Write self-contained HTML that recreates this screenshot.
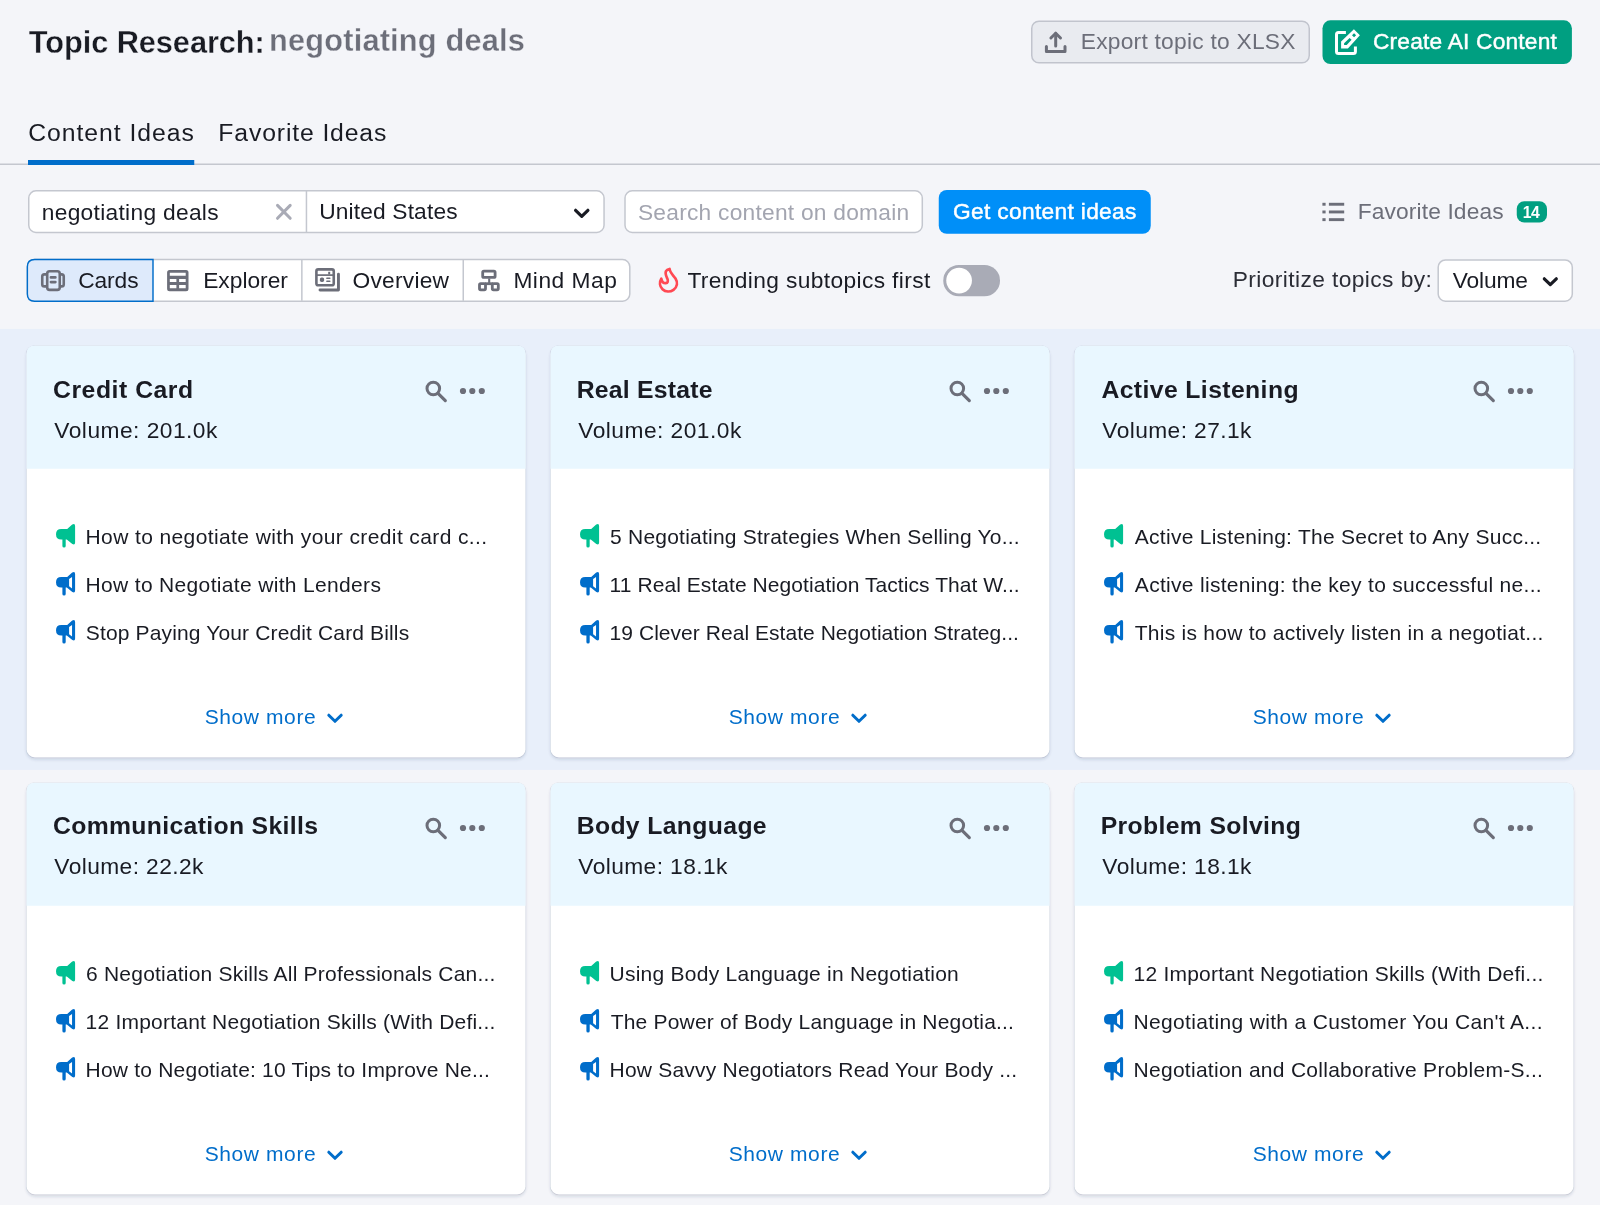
<!DOCTYPE html>
<html lang="en"><head><meta charset="utf-8"><title>Topic Research: negotiating deals</title>
<style>
*{box-sizing:border-box;margin:0;padding:0}
html,body{width:1600px;height:1205px;overflow:hidden}
body{background:#f4f5f9;font-family:"Liberation Sans",Arial,sans-serif;color:#191b23;position:relative}
.t{position:absolute;white-space:nowrap;line-height:1}
.ic{position:absolute;display:block;overflow:visible}
</style></head><body>
<svg width="0" height="0" style="position:absolute"><defs>
<path id="mega" d="M5.3 4.9H11.2L16.2 .6Q19.1 -.9 19.1 2V18.5Q19.1 21.5 16.3 20.1L10.8 15.6H9.7V21.9Q9.7 23.5 8.05 23.5Q6.4 23.5 6.4 21.9V15.6H5.3Q0 15.6 0 10.25Q0 4.9 5.3 4.9Z"/>
<path id="megao" fill-rule="evenodd" d="M5.3 4.9H11.2L16.2 .6Q19.1 -.9 19.1 2V18.5Q19.1 21.5 16.3 20.1L10.8 15.6H9.7V21.9Q9.7 23.5 8.05 23.5Q6.4 23.5 6.4 21.9V15.6H5.3Q0 15.6 0 10.25Q0 4.9 5.3 4.9ZM13.1 6.9L16.05 4.9V16.5L13.1 14.2Z"/>
</defs></svg>

<svg class="ic" style="left:0;top:0" width="1600" height="1205" viewBox="0 0 1600 1205">
<defs><filter id="sh" x="-5%" y="-5%" width="110%" height="112%"><feGaussianBlur in="SourceAlpha" stdDeviation="1.5"/><feOffset dy="1.5" result="b"/><feFlood flood-color="#28375a" flood-opacity=".16"/><feComposite in2="b" operator="in"/></filter></defs>
<rect x="0" y="328.9" width="1600" height="441" fill="#e8effa"/>
<!-- header buttons -->
<rect x="1031.75" y="21.15" width="277.5" height="41.7" rx="7.25" fill="#e9ebf0" stroke="#c1c4cd" stroke-width="1.5"/>
<rect x="1322.5" y="20.3" width="249.4" height="43.7" rx="8" fill="#009f81"/>
<!-- tabs -->
<rect x="0" y="163.5" width="1600" height="1.5" fill="#c4c7cf"/>
<rect x="28" y="160" width="166.25" height="5" fill="#006dca"/>
<!-- inputs -->
<rect x="28.75" y="190.85" width="575.3" height="41.6" rx="7.25" fill="#fff" stroke="#c4c7cf" stroke-width="1.5"/>
<rect x="305.7" y="191" width="1.5" height="41.4" fill="#c4c7cf"/>
<rect x="625" y="190.85" width="297.3" height="41.6" rx="7.25" fill="#fff" stroke="#c4c7cf" stroke-width="1.5"/>
<rect x="938.75" y="190" width="212" height="43.75" rx="8" fill="#008ff8"/>
<rect x="1516.75" y="201.25" width="30.25" height="21.25" rx="7.5" fill="#009f81"/>
<!-- view switch -->
<rect x="27.5" y="259.6" width="602.3" height="41.6" rx="7.25" fill="#fff" stroke="#c4c7cf" stroke-width="1.5"/>
<path d="M153 259.5H34.6Q27.35 259.5 27.35 266.75V294.05Q27.35 301.3 34.6 301.3H153Z" fill="#deeafb" stroke="#006dca" stroke-width="1.45"/>
<rect x="301.1" y="260" width="1.5" height="40.8" fill="#c4c7cf"/>
<rect x="462.5" y="260" width="1.5" height="40.8" fill="#c4c7cf"/>
<rect x="943.25" y="265" width="56.75" height="31.25" rx="15.6" fill="#a9abb6"/>
<circle cx="959.1" cy="280.6" r="12.85" fill="#fff"/>
<rect x="1438.2" y="260" width="134.1" height="41.2" rx="7.25" fill="#fff" stroke="#c4c7cf" stroke-width="1.5"/>
<rect x="26.55" y="345.70" width="499.0" height="411.8" rx="8.3" filter="url(#sh)"/>
<rect x="26.05" y="345.20" width="500.0" height="412.8" rx="8.8" fill="#3c4b6e" fill-opacity=".13"/>
<rect x="26.55" y="345.70" width="499.0" height="411.8" rx="8.3" fill="#fff"/>
<path d="M26.55 468.70V354.00Q26.55 345.70 34.85 345.70H517.25Q525.55 345.70 525.55 354.00V468.70Z" fill="#e9f7ff"/>
<rect x="550.55" y="345.70" width="499.0" height="411.8" rx="8.3" filter="url(#sh)"/>
<rect x="550.05" y="345.20" width="500.0" height="412.8" rx="8.8" fill="#3c4b6e" fill-opacity=".13"/>
<rect x="550.55" y="345.70" width="499.0" height="411.8" rx="8.3" fill="#fff"/>
<path d="M550.55 468.70V354.00Q550.55 345.70 558.85 345.70H1041.25Q1049.55 345.70 1049.55 354.00V468.70Z" fill="#e9f7ff"/>
<rect x="1074.55" y="345.70" width="499.0" height="411.8" rx="8.3" filter="url(#sh)"/>
<rect x="1074.05" y="345.20" width="500.0" height="412.8" rx="8.8" fill="#3c4b6e" fill-opacity=".13"/>
<rect x="1074.55" y="345.70" width="499.0" height="411.8" rx="8.3" fill="#fff"/>
<path d="M1074.55 468.70V354.00Q1074.55 345.70 1082.85 345.70H1565.25Q1573.55 345.70 1573.55 354.00V468.70Z" fill="#e9f7ff"/>
<rect x="26.55" y="782.70" width="499.0" height="411.8" rx="8.3" filter="url(#sh)"/>
<rect x="26.05" y="782.20" width="500.0" height="412.8" rx="8.8" fill="#3c4b6e" fill-opacity=".13"/>
<rect x="26.55" y="782.70" width="499.0" height="411.8" rx="8.3" fill="#fff"/>
<path d="M26.55 905.70V791.00Q26.55 782.70 34.85 782.70H517.25Q525.55 782.70 525.55 791.00V905.70Z" fill="#e9f7ff"/>
<rect x="550.55" y="782.70" width="499.0" height="411.8" rx="8.3" filter="url(#sh)"/>
<rect x="550.05" y="782.20" width="500.0" height="412.8" rx="8.8" fill="#3c4b6e" fill-opacity=".13"/>
<rect x="550.55" y="782.70" width="499.0" height="411.8" rx="8.3" fill="#fff"/>
<path d="M550.55 905.70V791.00Q550.55 782.70 558.85 782.70H1041.25Q1049.55 782.70 1049.55 791.00V905.70Z" fill="#e9f7ff"/>
<rect x="1074.55" y="782.70" width="499.0" height="411.8" rx="8.3" filter="url(#sh)"/>
<rect x="1074.05" y="782.20" width="500.0" height="412.8" rx="8.8" fill="#3c4b6e" fill-opacity=".13"/>
<rect x="1074.55" y="782.70" width="499.0" height="411.8" rx="8.3" fill="#fff"/>
<path d="M1074.55 905.70V791.00Q1074.55 782.70 1082.85 782.70H1565.25Q1573.55 782.70 1573.55 791.00V905.70Z" fill="#e9f7ff"/>
</svg>

<!-- icons -->
<svg class="ic" style="left:0;top:0" width="1600" height="320" viewBox="0 0 1600 320">
<g fill="none" stroke="#6c6e79" stroke-width="3" stroke-linecap="round" stroke-linejoin="round">
<path d="M1046.4 46.6V51.4H1065V46.6"/><path d="M1055.7 33.6V46.1"/><path d="M1050.9 38L1055.7 33.2L1060.5 38"/>
</g>
<path d="M1345.9 32.6H1338.5Q1336.5 32.6 1336.5 34.6V51.4Q1336.5 53.4 1338.5 53.4H1353.4Q1355.4 53.4 1355.4 51.4V46.6" fill="none" stroke="#fff" stroke-width="3"/>
<path fill="#fff" fill-rule="evenodd" d="M1341.1 48.6V41.6L1353.9 29.3L1359.9 35.3L1347.9 48.6ZM1354.05 33.3L1356.1 35.3L1354.05 37.3L1352 35.3ZM1349.6 37.9L1351.6 39.7L1346.7 44.9H1344.1V43.2Z"/>
<path d="M277.5 205.4L290.2 218.3M290.2 205.4L277.5 218.3" stroke="#a9abb6" stroke-width="3" stroke-linecap="round"/>
<path d="M575.6 210.3L581.75 216.3L587.9 210.3" fill="none" stroke="#191b23" stroke-width="3.2" stroke-linecap="round" stroke-linejoin="round"/>
<path d="M1544.3 278.8L1550.3 284.6L1556.3 278.8" fill="none" stroke="#191b23" stroke-width="3.2" stroke-linecap="round" stroke-linejoin="round"/>
<g fill="#6c6e79">
<rect x="1322.4" y="202.8" width="3.2" height="2.9"/><rect x="1328.9" y="202.8" width="15.3" height="2.9"/>
<rect x="1322.4" y="210.5" width="3.2" height="2.9"/><rect x="1328.9" y="210.5" width="15.3" height="2.9"/>
<rect x="1322.4" y="218.2" width="3.2" height="2.9"/><rect x="1328.9" y="218.2" width="15.3" height="2.9"/>
</g>
<!-- cards icon -->
<g fill="none" stroke="#6c6e79" stroke-width="2.6" stroke-linecap="round" stroke-linejoin="round">
<rect x="47.2" y="271.25" width="12.55" height="18.65" rx="2.4"/>
<path d="M50.9 277.4H55.4M50.9 282.1H55.4"/>
<path d="M46.5 274.4H44.4Q42.25 274.4 42.25 276.6V284.2Q42.25 286.4 44.4 286.4H46.5"/>
<path d="M60.5 274.4H61.6Q63.75 274.4 63.75 276.6V284.2Q63.75 286.4 61.6 286.4H60.5"/>
</g>
<!-- explorer icon -->
<path fill="#6c6e79" fill-rule="evenodd" d="M169.6 270H186Q188.5 270 188.5 272.5V288.7Q188.5 291.2 186 291.2H169.6Q167.1 291.2 167.1 288.7V272.5Q167.1 270 169.6 270ZM169.8 272.8V275.8H185.7V272.8ZM169.8 278.9V281.9H176.4V278.9ZM179.1 278.9V281.9H185.7V278.9ZM169.8 285.1V288.2H176.4V285.1ZM179.1 285.1V288.2H185.7V285.1Z"/>
<!-- overview icon -->
<g fill="none" stroke="#6c6e79" stroke-linecap="round" stroke-linejoin="round">
<rect x="316.4" y="269.4" width="17.35" height="15.9" rx="1.8" stroke-width="2.6"/>
<path d="M317 275.1H333" stroke-width="1.7" stroke-linecap="butt"/>
<path d="M338.45 274.2V289.95H320" stroke-width="2.9"/>
<path d="M326.9 278.3H329.8M326.9 281.3H329.8" stroke-width="1.6"/>
</g>
<rect x="319.9" y="277.4" width="4.2" height="4.5" rx="1.6" fill="#6c6e79"/>
<rect x="328.2" y="271.8" width="2" height="2.6" fill="#6c6e79"/>
<!-- mind map icon -->
<g fill="none" stroke="#6c6e79" stroke-width="2.8" stroke-linejoin="round">
<rect x="482.7" y="271.2" width="12.4" height="6.2" rx="1.2"/>
<rect x="479.5" y="283.7" width="6" height="6.1" rx="1.2"/>
<rect x="492.3" y="283.7" width="6" height="6.1" rx="1.2"/>
<path d="M485 283.7H493" />
<path d="M489.2 278.5V283" stroke-width="2.1"/>
</g>
<!-- fire -->
<path d="M669.6 269C669.8 272.5 673.5 275.5 675.5 278.5C678 282.5 677.3 287 673.5 289.8C670 292.3 665.5 292 662.5 289.2C659.5 286.3 659.3 282 661.3 278.7C661.8 281.5 663.5 283.3 665.7 283.2C667.8 283 668.4 281 667.4 278.8C666 275.8 664.8 273.5 666 271.2C666.8 269.8 668 269.4 669.6 269Z" fill="none" stroke="#ff4953" stroke-width="2.7" stroke-linejoin="round"/>
</svg>
<svg class="ic" style="left:424.25px;top:378.5px" width="24" height="24" viewBox="0 0 24 24"><circle cx="9.3" cy="9.5" r="6.3" fill="none" stroke="#6c6e79" stroke-width="3"/><path d="M14 14.3L21.3 21.6" stroke="#6c6e79" stroke-width="3.2" stroke-linecap="round"/></svg>
<svg class="ic" style="left:459.25px;top:387.0px" width="27" height="8" viewBox="0 0 27 8"><circle cx="4" cy="4" r="3.1" fill="#6c6e79"/><circle cx="13.3" cy="4" r="3.1" fill="#6c6e79"/><circle cx="22.8" cy="4" r="3.1" fill="#6c6e79"/></svg>
<svg class="ic" style="left:55.95px;top:523.70px" width="19.1" height="23.5" viewBox="0 0 19.1 23.5"><use href="#mega" fill="#00c192"/></svg>
<svg class="ic" style="left:55.95px;top:571.85px" width="19.1" height="23.5" viewBox="0 0 19.1 23.5"><use href="#megao" fill="#006dca"/></svg>
<svg class="ic" style="left:55.95px;top:620.00px" width="19.1" height="23.5" viewBox="0 0 19.1 23.5"><use href="#megao" fill="#006dca"/></svg>
<svg class="ic" style="left:326.25px;top:712.0px" width="18" height="13" viewBox="0 0 18 13"><path d="M2.8 3.2L9 9.3L15.2 3.2" fill="none" stroke="#006dca" stroke-width="3" stroke-linecap="round" stroke-linejoin="round"/></svg>
<svg class="ic" style="left:948.25px;top:378.5px" width="24" height="24" viewBox="0 0 24 24"><circle cx="9.3" cy="9.5" r="6.3" fill="none" stroke="#6c6e79" stroke-width="3"/><path d="M14 14.3L21.3 21.6" stroke="#6c6e79" stroke-width="3.2" stroke-linecap="round"/></svg>
<svg class="ic" style="left:983.25px;top:387.0px" width="27" height="8" viewBox="0 0 27 8"><circle cx="4" cy="4" r="3.1" fill="#6c6e79"/><circle cx="13.3" cy="4" r="3.1" fill="#6c6e79"/><circle cx="22.8" cy="4" r="3.1" fill="#6c6e79"/></svg>
<svg class="ic" style="left:579.95px;top:523.70px" width="19.1" height="23.5" viewBox="0 0 19.1 23.5"><use href="#mega" fill="#00c192"/></svg>
<svg class="ic" style="left:579.95px;top:571.85px" width="19.1" height="23.5" viewBox="0 0 19.1 23.5"><use href="#megao" fill="#006dca"/></svg>
<svg class="ic" style="left:579.95px;top:620.00px" width="19.1" height="23.5" viewBox="0 0 19.1 23.5"><use href="#megao" fill="#006dca"/></svg>
<svg class="ic" style="left:850.25px;top:712.0px" width="18" height="13" viewBox="0 0 18 13"><path d="M2.8 3.2L9 9.3L15.2 3.2" fill="none" stroke="#006dca" stroke-width="3" stroke-linecap="round" stroke-linejoin="round"/></svg>
<svg class="ic" style="left:1472.25px;top:378.5px" width="24" height="24" viewBox="0 0 24 24"><circle cx="9.3" cy="9.5" r="6.3" fill="none" stroke="#6c6e79" stroke-width="3"/><path d="M14 14.3L21.3 21.6" stroke="#6c6e79" stroke-width="3.2" stroke-linecap="round"/></svg>
<svg class="ic" style="left:1507.25px;top:387.0px" width="27" height="8" viewBox="0 0 27 8"><circle cx="4" cy="4" r="3.1" fill="#6c6e79"/><circle cx="13.3" cy="4" r="3.1" fill="#6c6e79"/><circle cx="22.8" cy="4" r="3.1" fill="#6c6e79"/></svg>
<svg class="ic" style="left:1103.95px;top:523.70px" width="19.1" height="23.5" viewBox="0 0 19.1 23.5"><use href="#mega" fill="#00c192"/></svg>
<svg class="ic" style="left:1103.95px;top:571.85px" width="19.1" height="23.5" viewBox="0 0 19.1 23.5"><use href="#megao" fill="#006dca"/></svg>
<svg class="ic" style="left:1103.95px;top:620.00px" width="19.1" height="23.5" viewBox="0 0 19.1 23.5"><use href="#megao" fill="#006dca"/></svg>
<svg class="ic" style="left:1374.25px;top:712.0px" width="18" height="13" viewBox="0 0 18 13"><path d="M2.8 3.2L9 9.3L15.2 3.2" fill="none" stroke="#006dca" stroke-width="3" stroke-linecap="round" stroke-linejoin="round"/></svg>
<svg class="ic" style="left:424.25px;top:815.5px" width="24" height="24" viewBox="0 0 24 24"><circle cx="9.3" cy="9.5" r="6.3" fill="none" stroke="#6c6e79" stroke-width="3"/><path d="M14 14.3L21.3 21.6" stroke="#6c6e79" stroke-width="3.2" stroke-linecap="round"/></svg>
<svg class="ic" style="left:459.25px;top:824.0px" width="27" height="8" viewBox="0 0 27 8"><circle cx="4" cy="4" r="3.1" fill="#6c6e79"/><circle cx="13.3" cy="4" r="3.1" fill="#6c6e79"/><circle cx="22.8" cy="4" r="3.1" fill="#6c6e79"/></svg>
<svg class="ic" style="left:55.95px;top:960.70px" width="19.1" height="23.5" viewBox="0 0 19.1 23.5"><use href="#mega" fill="#00c192"/></svg>
<svg class="ic" style="left:55.95px;top:1008.85px" width="19.1" height="23.5" viewBox="0 0 19.1 23.5"><use href="#megao" fill="#006dca"/></svg>
<svg class="ic" style="left:55.95px;top:1057.00px" width="19.1" height="23.5" viewBox="0 0 19.1 23.5"><use href="#megao" fill="#006dca"/></svg>
<svg class="ic" style="left:326.25px;top:1149.0px" width="18" height="13" viewBox="0 0 18 13"><path d="M2.8 3.2L9 9.3L15.2 3.2" fill="none" stroke="#006dca" stroke-width="3" stroke-linecap="round" stroke-linejoin="round"/></svg>
<svg class="ic" style="left:948.25px;top:815.5px" width="24" height="24" viewBox="0 0 24 24"><circle cx="9.3" cy="9.5" r="6.3" fill="none" stroke="#6c6e79" stroke-width="3"/><path d="M14 14.3L21.3 21.6" stroke="#6c6e79" stroke-width="3.2" stroke-linecap="round"/></svg>
<svg class="ic" style="left:983.25px;top:824.0px" width="27" height="8" viewBox="0 0 27 8"><circle cx="4" cy="4" r="3.1" fill="#6c6e79"/><circle cx="13.3" cy="4" r="3.1" fill="#6c6e79"/><circle cx="22.8" cy="4" r="3.1" fill="#6c6e79"/></svg>
<svg class="ic" style="left:579.95px;top:960.70px" width="19.1" height="23.5" viewBox="0 0 19.1 23.5"><use href="#mega" fill="#00c192"/></svg>
<svg class="ic" style="left:579.95px;top:1008.85px" width="19.1" height="23.5" viewBox="0 0 19.1 23.5"><use href="#megao" fill="#006dca"/></svg>
<svg class="ic" style="left:579.95px;top:1057.00px" width="19.1" height="23.5" viewBox="0 0 19.1 23.5"><use href="#megao" fill="#006dca"/></svg>
<svg class="ic" style="left:850.25px;top:1149.0px" width="18" height="13" viewBox="0 0 18 13"><path d="M2.8 3.2L9 9.3L15.2 3.2" fill="none" stroke="#006dca" stroke-width="3" stroke-linecap="round" stroke-linejoin="round"/></svg>
<svg class="ic" style="left:1472.25px;top:815.5px" width="24" height="24" viewBox="0 0 24 24"><circle cx="9.3" cy="9.5" r="6.3" fill="none" stroke="#6c6e79" stroke-width="3"/><path d="M14 14.3L21.3 21.6" stroke="#6c6e79" stroke-width="3.2" stroke-linecap="round"/></svg>
<svg class="ic" style="left:1507.25px;top:824.0px" width="27" height="8" viewBox="0 0 27 8"><circle cx="4" cy="4" r="3.1" fill="#6c6e79"/><circle cx="13.3" cy="4" r="3.1" fill="#6c6e79"/><circle cx="22.8" cy="4" r="3.1" fill="#6c6e79"/></svg>
<svg class="ic" style="left:1103.95px;top:960.70px" width="19.1" height="23.5" viewBox="0 0 19.1 23.5"><use href="#mega" fill="#00c192"/></svg>
<svg class="ic" style="left:1103.95px;top:1008.85px" width="19.1" height="23.5" viewBox="0 0 19.1 23.5"><use href="#megao" fill="#006dca"/></svg>
<svg class="ic" style="left:1103.95px;top:1057.00px" width="19.1" height="23.5" viewBox="0 0 19.1 23.5"><use href="#megao" fill="#006dca"/></svg>
<svg class="ic" style="left:1374.25px;top:1149.0px" width="18" height="13" viewBox="0 0 18 13"><path d="M2.8 3.2L9 9.3L15.2 3.2" fill="none" stroke="#006dca" stroke-width="3" stroke-linecap="round" stroke-linejoin="round"/></svg>
<div style="position:absolute;left:0;top:0;width:1600px;height:1205px;will-change:transform">
<span class="t er" style="left:28.85px;top:28.00px;font-size:30.75px;letter-spacing:-0.072px;color:#191b23;font-weight:bold;-webkit-text-stroke:0.3px #f4f5f9">Topic Research:</span>
<span class="t er" style="left:269.10px;top:26.00px;font-size:30.75px;letter-spacing:0.181px;color:#6c6e79;font-weight:bold;-webkit-text-stroke:0.3px #f4f5f9">negotiating deals</span>
<span class="t" style="left:1080.73px;top:30.00px;font-size:22.75px;letter-spacing:0.251px;color:#6c6e79">Export topic to XLSX</span>
<span class="t" style="left:1372.93px;top:30.00px;font-size:22.75px;letter-spacing:0.195px;color:#fff;-webkit-text-stroke:0.45px #fff">Create AI Content</span>
<span class="t" style="left:28.18px;top:121.00px;font-size:24.75px;letter-spacing:0.971px;color:#191b23">Content Ideas</span>
<span class="t" style="left:218.34px;top:121.00px;font-size:24.75px;letter-spacing:0.863px;color:#191b23">Favorite Ideas</span>
<span class="t" style="left:41.76px;top:201.00px;font-size:22.75px;letter-spacing:0.300px;color:#191b23">negotiating deals</span>
<span class="t" style="left:319.20px;top:200.00px;font-size:22.75px;letter-spacing:0.151px;color:#191b23">United States</span>
<span class="t" style="left:637.93px;top:201.00px;font-size:22.75px;letter-spacing:0.242px;color:#a3a5b0">Search content on domain</span>
<span class="t" style="left:953.08px;top:200.00px;font-size:22.75px;letter-spacing:0.314px;color:#fff;-webkit-text-stroke:0.45px #fff">Get content ideas</span>
<span class="t" style="left:1357.71px;top:200.00px;font-size:22.75px;letter-spacing:0.133px;color:#6c6e79">Favorite Ideas</span>
<span class="t" style="left:1522.63px;top:205.00px;font-size:15.75px;letter-spacing:-0.316px;color:#fff;font-weight:bold">14</span>
<span class="t" style="left:78.20px;top:269.00px;font-size:22.75px;letter-spacing:-0.074px;color:#191b23">Cards</span>
<span class="t" style="left:203.18px;top:269.00px;font-size:22.75px;letter-spacing:0.008px;color:#191b23">Explorer</span>
<span class="t" style="left:352.55px;top:269.00px;font-size:22.75px;letter-spacing:0.240px;color:#191b23">Overview</span>
<span class="t" style="left:513.38px;top:269.00px;font-size:22.75px;letter-spacing:0.513px;color:#191b23">Mind Map</span>
<span class="t" style="left:687.39px;top:269.00px;font-size:22.75px;letter-spacing:0.371px;color:#191b23">Trending subtopics first</span>
<span class="t" style="left:1232.71px;top:268.00px;font-size:22.75px;letter-spacing:0.409px;color:#2b2d36">Prioritize topics by:</span>
<span class="t" style="left:1452.69px;top:269.00px;font-size:22.75px;letter-spacing:-0.113px;color:#191b23">Volume</span>
<span class="t" style="left:53.00px;top:378.00px;font-size:24.75px;letter-spacing:0.535px;color:#191b23;font-weight:bold">Credit Card</span>
<span class="t" style="left:54.32px;top:419.00px;font-size:22.75px;letter-spacing:0.479px;color:#191b23">Volume: 201.0k</span>
<span class="t" style="left:85.55px;top:526.00px;font-size:21.0px;letter-spacing:0.391px;color:#191b23">How to negotiate with your credit card c...</span>
<span class="t" style="left:85.55px;top:574.00px;font-size:21.0px;letter-spacing:0.335px;color:#191b23">How to Negotiate with Lenders</span>
<span class="t" style="left:85.85px;top:622.00px;font-size:21.0px;letter-spacing:0.140px;color:#191b23">Stop Paying Your Credit Card Bills</span>
<span class="t" style="left:204.67px;top:706.00px;font-size:21.0px;letter-spacing:0.598px;color:#006dca">Show more</span>
<span class="t" style="left:576.69px;top:378.00px;font-size:24.75px;letter-spacing:0.237px;color:#191b23;font-weight:bold">Real Estate</span>
<span class="t" style="left:578.32px;top:419.00px;font-size:22.75px;letter-spacing:0.471px;color:#191b23">Volume: 201.0k</span>
<span class="t" style="left:610.09px;top:526.00px;font-size:21.0px;letter-spacing:0.219px;color:#191b23">5 Negotiating Strategies When Selling Yo...</span>
<span class="t" style="left:609.62px;top:574.00px;font-size:21.0px;letter-spacing:0.062px;color:#191b23">11 Real Estate Negotiation Tactics That W...</span>
<span class="t" style="left:609.62px;top:622.00px;font-size:21.0px;letter-spacing:0.043px;color:#191b23">19 Clever Real Estate Negotiation Strateg...</span>
<span class="t" style="left:728.67px;top:706.00px;font-size:21.0px;letter-spacing:0.598px;color:#006dca">Show more</span>
<span class="t" style="left:1101.43px;top:378.00px;font-size:24.75px;letter-spacing:0.395px;color:#191b23;font-weight:bold">Active Listening</span>
<span class="t" style="left:1102.32px;top:419.00px;font-size:22.75px;letter-spacing:0.406px;color:#191b23">Volume: 27.1k</span>
<span class="t" style="left:1134.84px;top:526.00px;font-size:21.0px;letter-spacing:0.263px;color:#191b23">Active Listening: The Secret to Any Succ...</span>
<span class="t" style="left:1134.84px;top:574.00px;font-size:21.0px;letter-spacing:0.305px;color:#191b23">Active listening: the key to successful ne...</span>
<span class="t" style="left:1134.71px;top:622.00px;font-size:21.0px;letter-spacing:0.256px;color:#191b23">This is how to actively listen in a negotiat...</span>
<span class="t" style="left:1252.67px;top:706.00px;font-size:21.0px;letter-spacing:0.598px;color:#006dca">Show more</span>
<span class="t" style="left:53.00px;top:814.00px;font-size:24.75px;letter-spacing:0.335px;color:#191b23;font-weight:bold">Communication Skills</span>
<span class="t" style="left:54.32px;top:855.00px;font-size:22.75px;letter-spacing:0.406px;color:#191b23">Volume: 22.2k</span>
<span class="t" style="left:86.09px;top:963.00px;font-size:21.0px;letter-spacing:0.203px;color:#191b23">6 Negotiation Skills All Professionals Can...</span>
<span class="t" style="left:85.62px;top:1011.00px;font-size:21.0px;letter-spacing:0.213px;color:#191b23">12 Important Negotiation Skills (With Defi...</span>
<span class="t" style="left:85.55px;top:1059.00px;font-size:21.0px;letter-spacing:0.212px;color:#191b23">How to Negotiate: 10 Tips to Improve Ne...</span>
<span class="t" style="left:204.67px;top:1143.00px;font-size:21.0px;letter-spacing:0.598px;color:#006dca">Show more</span>
<span class="t" style="left:576.69px;top:814.00px;font-size:24.75px;letter-spacing:0.359px;color:#191b23;font-weight:bold">Body Language</span>
<span class="t" style="left:578.32px;top:855.00px;font-size:22.75px;letter-spacing:0.406px;color:#191b23">Volume: 18.1k</span>
<span class="t" style="left:609.54px;top:963.00px;font-size:21.0px;letter-spacing:0.253px;color:#191b23">Using Body Language in Negotiation</span>
<span class="t" style="left:610.71px;top:1011.00px;font-size:21.0px;letter-spacing:0.191px;color:#191b23">The Power of Body Language in Negotia...</span>
<span class="t" style="left:609.55px;top:1059.00px;font-size:21.0px;letter-spacing:0.213px;color:#191b23">How Savvy Negotiators Read Your Body ...</span>
<span class="t" style="left:728.67px;top:1143.00px;font-size:21.0px;letter-spacing:0.598px;color:#006dca">Show more</span>
<span class="t" style="left:1100.69px;top:814.00px;font-size:24.75px;letter-spacing:0.354px;color:#191b23;font-weight:bold">Problem Solving</span>
<span class="t" style="left:1102.32px;top:855.00px;font-size:22.75px;letter-spacing:0.406px;color:#191b23">Volume: 18.1k</span>
<span class="t" style="left:1133.62px;top:963.00px;font-size:21.0px;letter-spacing:0.213px;color:#191b23">12 Important Negotiation Skills (With Defi...</span>
<span class="t" style="left:1133.55px;top:1011.00px;font-size:21.0px;letter-spacing:0.339px;color:#191b23">Negotiating with a Customer You Can't A...</span>
<span class="t" style="left:1133.55px;top:1059.00px;font-size:21.0px;letter-spacing:0.274px;color:#191b23">Negotiation and Collaborative Problem-S...</span>
<span class="t" style="left:1252.67px;top:1143.00px;font-size:21.0px;letter-spacing:0.598px;color:#006dca">Show more</span>
</div>
</body></html>
